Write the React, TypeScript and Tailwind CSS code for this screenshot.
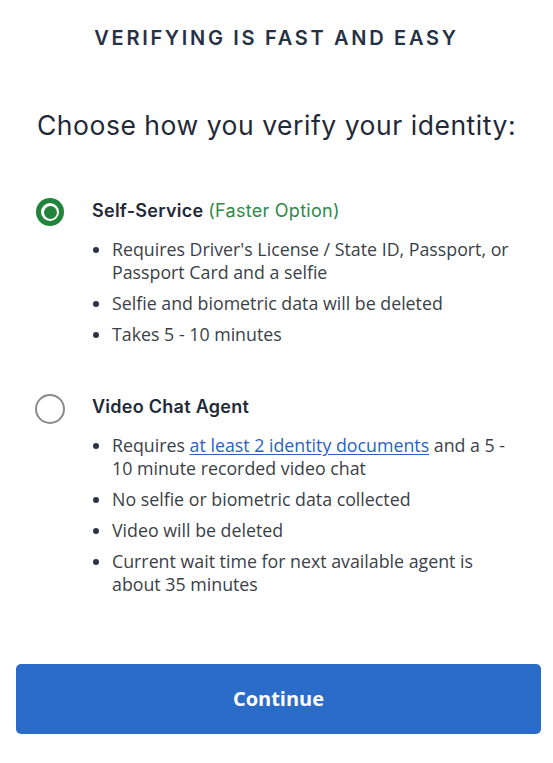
import React from 'react';

const headingFont = { fontFamily: 'Inter, "Noto Sans", sans-serif' };

function Radio({ checked }: { checked: boolean }) {
    if (checked) {
        return (
            <span className="flex h-[28px] w-[28px] shrink-0 items-center justify-center rounded-full bg-[#21843b]">
                <span className="flex h-[18px] w-[18px] items-center justify-center rounded-full bg-white">
                    <span className="h-[13px] w-[13px] rounded-full bg-[#21843b]" />
                </span>
            </span>
        );
    }
    return <span className="-ml-[1px] h-[30px] w-[30px] shrink-0 rounded-full border-[2.5px] border-[#8a8a8a]" />;
}

function Option({
    checked,
    title,
    children,
}: {
    checked: boolean;
    title: React.ReactNode;
    children: React.ReactNode;
}) {
    return (
        <div className="flex">
            <div className="flex w-[92px] shrink-0 pl-[36px] pt-[1px]">
                <Radio checked={checked} />
            </div>
            <div className="flex-1">
                <div
                    className="text-[18px] font-semibold leading-[28px] tracking-[0.015em] text-[#1f2937]"
                    style={headingFont}
                >
                    {title}
                </div>
                <ul className="mt-[13px] flex flex-col gap-[8px] pr-[32px]">{children}</ul>
            </div>
        </div>
    );
}

function Item({ children }: { children: React.ReactNode }) {
    return (
        <li className="flex text-[17.8px] leading-[23px] text-[#3a3f47]">
            <span className="flex w-[20px] shrink-0 pt-[9px]">
                <span className="ml-[1px] h-[6px] w-[6px] rounded-full bg-[#2d3340]" />
            </span>
            <span>{children}</span>
        </li>
    );
}

export default function App() {
    return (
        <div className="min-h-[763px] w-[553px] bg-white" style={{ fontFamily: '"Open Sans", sans-serif' }}>
            <div className="pt-[24px] text-center">
                <h1
                    className="text-[20px] font-semibold uppercase leading-[28px] tracking-[0.135em] text-[#263244]"
                    style={headingFont}
                >
                    Verifying is fast and easy
                </h1>
                <h2
                    className="mt-[55px] text-[26.5px] font-normal leading-[36px] tracking-[0.02em] text-[#1f2937]"
                    style={headingFont}
                >
                    Choose how you verify your identity:
                </h2>
            </div>

            <div className="mt-[54px] flex flex-col gap-[47px]">
                <Option
                    checked
                    title={
                        <>
                            Self-Service <span className="font-normal text-[#2f8a47]">(Faster Option)</span>
                        </>
                    }
                >
                    <Item>Requires Driver's License / State ID, Passport, or Passport Card and a selfie</Item>
                    <Item>Selfie and biometric data will be deleted</Item>
                    <Item>Takes 5 - 10 minutes</Item>
                </Option>

                <Option checked={false} title="Video Chat Agent">
                    <Item>
                        Requires{' '}
                        <a href="#" className="text-[#2c5fc4] underline underline-offset-2">
                            at least 2 identity documents
                        </a>{' '}
                        and a 5 - 10 minute recorded video chat
                    </Item>
                    <Item>No selfie or biometric data collected</Item>
                    <Item>Video will be deleted</Item>
                    <Item>Current wait time for next available agent is about 35 minutes</Item>
                </Option>
            </div>

            <div className="mt-[68px] pl-[16px] pr-[12px]">
                <button className="flex h-[70px] w-full items-center justify-center rounded-[5px] bg-[#2b6cc8] text-[20px] font-bold text-white">
                    Continue
                </button>
            </div>
        </div>
    );
}
